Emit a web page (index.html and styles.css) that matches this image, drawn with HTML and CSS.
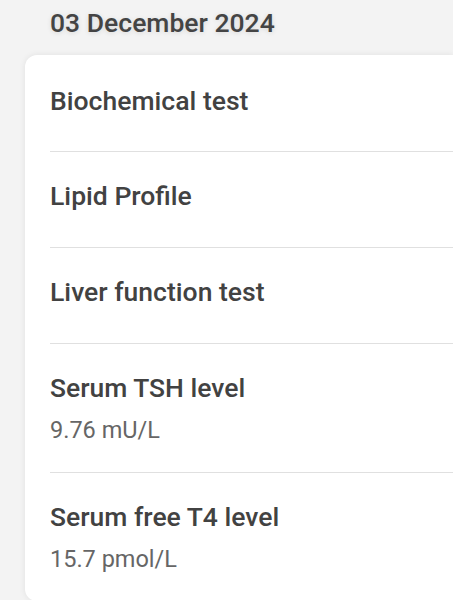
FILE: index.html
```html
<!DOCTYPE html>
<html>
	<head>
		<meta charset="utf-8">
		<title>Test results</title>
		<link rel="stylesheet" href="styles.css">
	</head>
	<body>
		<div class="date">03 December 2024</div>

		<div class="card">
			<div class="row">
				<div class="title">Biochemical test</div>
			</div>
			<div class="row">
				<div class="title">Lipid Profile</div>
			</div>
			<div class="row">
				<div class="title">Liver function test</div>
			</div>
			<div class="row">
				<div class="title">Serum TSH level</div>
				<div class="value">9.76 mU/L</div>
			</div>
			<div class="row">
				<div class="title">Serum free T4 level</div>
				<div class="value">15.7 pmol/L</div>
			</div>
		</div>
	</body>
</html>
```

FILE: styles.css
```css
html, body{
	margin: 0;
	height: 100%;
}
body{
	background-color: #f3f3f3;
	font-family: Roboto, "Noto Sans", sans-serif;
	overflow: hidden;
}

/* 日期标题 */
.date{
	padding: 8px 0 0 50px;
	margin-bottom: 17px;
	font-family: "Roboto Medium", Roboto, sans-serif;
	font-size: 26.5px;
	line-height: 30px;
	font-weight: 500;
	color: #444;
	text-shadow: 0 1px 5px rgba(0,0,0,0.12);
}

/* 卡片 右边被屏幕切掉 所以右边不要圆角 */
.card{
	margin-left: 25px;
	padding-left: 25px;
	background-color: #fff;
	border-radius: 12px 0 0 12px;
	box-shadow: 0 0 6px rgba(0,0,0,0.08);
}
.row{
	box-sizing: border-box;
	min-height: 96px;
	padding: 29px 0 28px;
	border-top: 1px solid #e0e0e0;
}
.row:first-child{
	padding-top: 31px;
	border-top: none;
}
.title{
	font-family: "Roboto Medium", Roboto, sans-serif;
	font-size: 26.5px;
	line-height: 30px;
	font-weight: 500;
	color: #424242;
}
.value{
	margin-top: 14px;
	font-size: 23.5px;
	line-height: 27px;
	color: #666;
}
```
